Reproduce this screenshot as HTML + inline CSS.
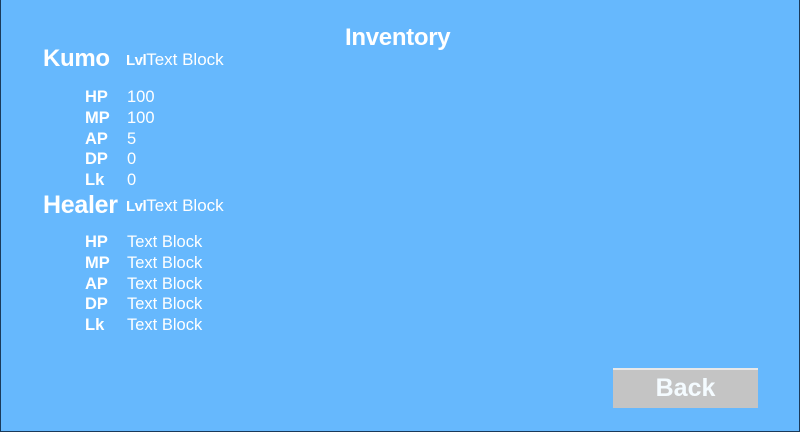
<!DOCTYPE html>
<html><head><style>
body{margin:0;width:800px;height:432px;overflow:hidden;background:#1a3a5a;}
#f{position:absolute;left:1px;top:0;width:798px;height:431px;background:#66b8fd;font-family:"Liberation Sans",sans-serif;color:#fff;}
.t{position:absolute;white-space:nowrap;line-height:1;}
.b{font-weight:bold;}
.h{font-size:24px;font-weight:bold;letter-spacing:-0.3px;}
.s{font-size:16.5px;}
#btn{position:absolute;left:612px;top:368px;width:145px;height:40px;background:#c4c4c4;border-top:2px solid #e8e8e8;box-sizing:border-box;text-align:center;font-size:25px;font-weight:bold;line-height:36px;color:#f4fbff;}
</style></head><body><div id="f">
<div class="t h" style="left:344px;top:26px">Inventory</div>
<div class="t h" style="left:42px;top:47px">Kumo</div>
<div class="t" style="left:125px;top:51px;font-size:17px"><b style="font-size:15px;letter-spacing:-0.5px">Lvl</b>Text Block</div>
<div class="t s b" style="left:84px;top:87px;line-height:20.8px">HP<br>MP<br>AP<br>DP<br>Lk</div>
<div class="t s" style="left:126px;top:87px;line-height:20.8px">100<br>100<br>5<br>0<br>0</div>
<div class="t h" style="left:42px;top:193px;font-size:25px">Healer</div>
<div class="t" style="left:125px;top:197px;font-size:17px"><b style="font-size:15px;letter-spacing:-0.5px">Lvl</b>Text Block</div>
<div class="t s b" style="left:84px;top:232px;line-height:20.8px">HP<br>MP<br>AP<br>DP<br>Lk</div>
<div class="t s" style="left:126px;top:232px;line-height:20.8px">Text Block<br>Text Block<br>Text Block<br>Text Block<br>Text Block</div>
<div id="btn">Back</div>
</div></body></html>
